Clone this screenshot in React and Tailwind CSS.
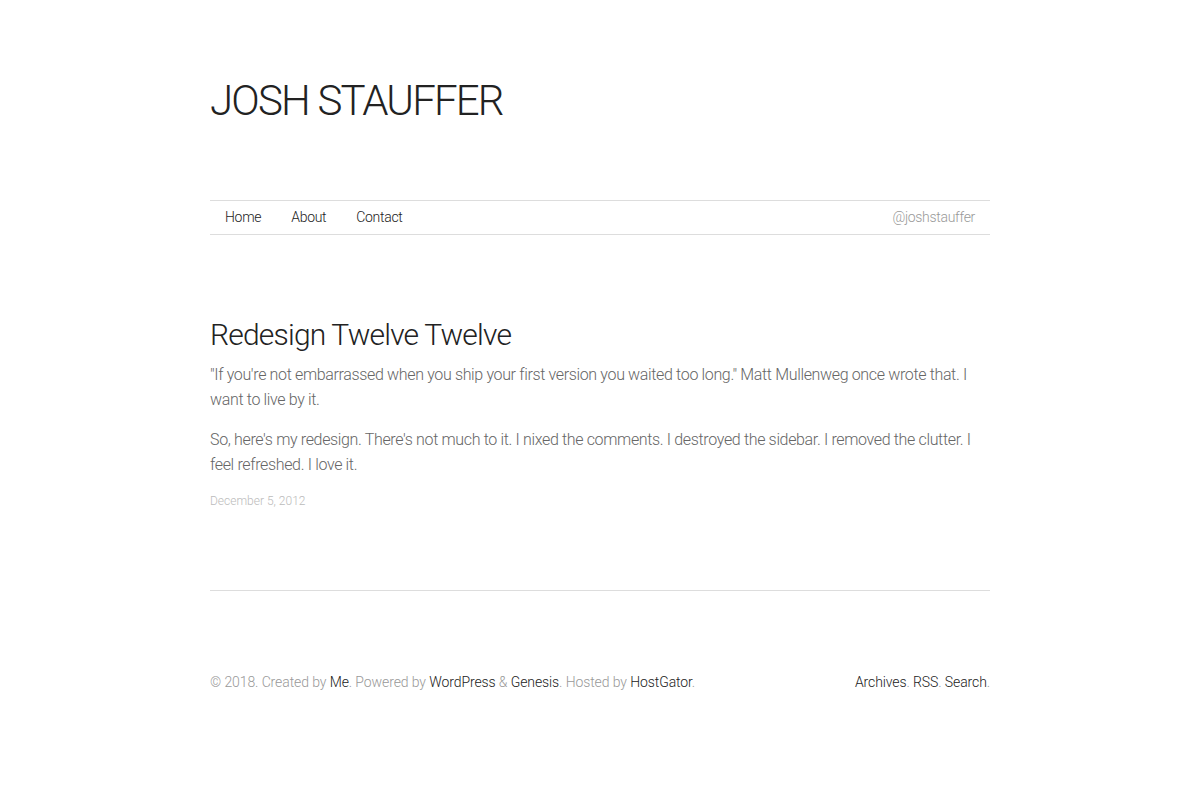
import React from 'react';

export default function App() {
    return (
        <div className="min-h-[800px] bg-white font-['Roboto',Arial,sans-serif] font-light">
            <div className="w-[780px] mx-auto">
                <header className="pt-[76px] h-[200px]">
                    <h1 className="text-[42px] leading-[50px] text-[#222] font-light tracking-[-1.8px]">JOSH STAUFFER</h1>
                </header>
                <nav className="h-[35px] border-y border-[#ddd] flex items-center justify-between px-[15px] text-[14px] text-[#222] tracking-[-0.3px]">
                    <ul className="flex gap-[30px]">
                        <li>Home</li>
                        <li>About</li>
                        <li>Contact</li>
                    </ul>
                    <span className="text-[#999]">@joshstauffer</span>
                </nav>
                <article className="pt-[80px] pb-[79px] border-b border-[#ddd]">
                    <h2 className="text-[30px] leading-[40px] text-[#222] mb-[7px] tracking-[-0.8px]">Redesign Twelve Twelve</h2>
                    <p className="text-[16px] leading-[25px] text-[#666] mb-[15px] tracking-[-0.35px]">
                        "If you're not embarrassed when you ship your first version you waited too long." Matt Mullenweg once wrote that. I want to live by it.
                    </p>
                    <p className="text-[16px] leading-[25px] text-[#666] mb-[14px] tracking-[-0.35px]">
                        So, here's my redesign. There's not much to it. I nixed the comments. I destroyed the sidebar. I removed the clutter. I feel refreshed. I love it.
                    </p>
                    <p className="text-[12px] leading-[20px] text-[#bbb]">December 5, 2012</p>
                </article>
                <footer className="pt-[81px] flex justify-between text-[14px] leading-[20px] text-[#999] tracking-[-0.1px]">
                    <p>
                        © 2018. Created by <span className="text-[#222]">Me</span>. Powered by <span className="text-[#222]">WordPress</span> &amp; <span className="text-[#222]">Genesis</span>. Hosted by <span className="text-[#222]">HostGator</span>.
                    </p>
                    <p>
                        <span className="text-[#222]">Archives</span>. <span className="text-[#222]">RSS</span>. <span className="text-[#222]">Search</span>.
                    </p>
                </footer>
            </div>
        </div>
    );
}
